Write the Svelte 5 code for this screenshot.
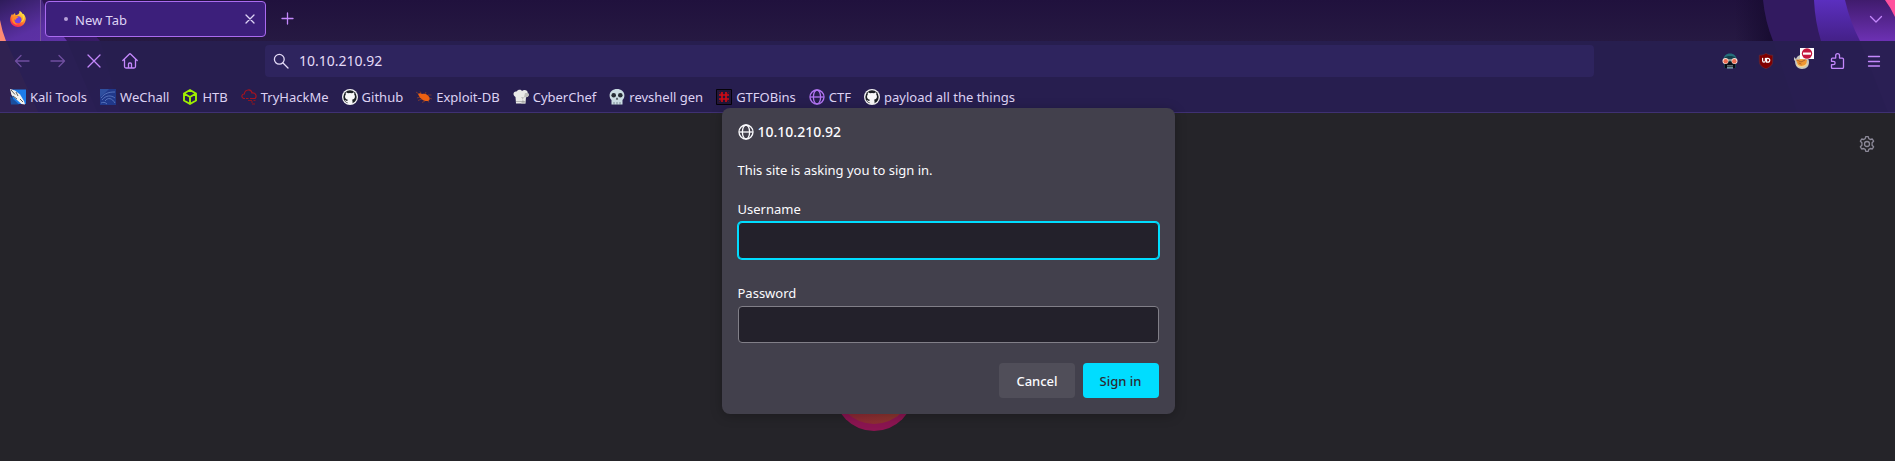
<script>
  const bookmarks = [
    { icon: 'kali', label: 'Kali Tools' },
    { icon: 'wechall', label: 'WeChall' },
    { icon: 'htb', label: 'HTB' },
    { icon: 'thm', label: 'TryHackMe' },
    { icon: 'github', label: 'Github' },
    { icon: 'exploit', label: 'Exploit-DB' },
    { icon: 'chef', label: 'CyberChef' },
    { icon: 'skull', label: 'revshell gen' },
    { icon: 'gtfo', label: 'GTFOBins' },
    { icon: 'globe', label: 'CTF' },
    { icon: 'github', label: 'payload all the things' }
  ];
  let address = $state('10.10.210.92');
  let username = $state('');
  let password = $state('');
</script>

{#snippet globe()}
  <g fill="none" stroke="currentColor" stroke-width="1.3">
    <circle cx="8" cy="8" r="7" />
    <ellipse cx="8" cy="8" rx="3.6" ry="7" />
    <path d="M1.2 8h13.600" />
  </g>
{/snippet}

{#snippet glyph(name)}
  <svg class="glyph" viewBox="0 0 16 16" width="16" height="16" aria-hidden="true">
    {#if name === 'kali'}
      <path d="M2 .5h14V15H3z" fill="#1c7ce8" />
      <path d="M0 7l9 8.500H1z" fill="#1a4f9e" />
      <path d="M0 0l5 1.500 5 4 4 6.500 1 3.500-3.500-.5-5-4.500L1.500 6z" fill="#f4f4f0" />
      <path d="M1 1l4 4.500M6 3l2 4M10 10l3 3M3 7l4 3" stroke="#333" stroke-width=".8" fill="none" />
    {:else if name === 'wechall'}
      <path d="M0 0h16v16H0z" fill="#20388a" />
      <path d="M0 0h9L4 5 0 8z" fill="#2f4f9f" />
      <path d="M1 9C5 4 9 3 15 3M2 11c4-5 9-5 13-2M5 12c3-4 7-3 10 2M1 14c2-1 4-1 6 1" stroke="#6380c6" stroke-width=".8" fill="none" />
    {:else if name === 'htb'}
      <path d="M8 1l6 3.500v7L8 15l-6-3.500v-7zM2.500 4.800L8 8l5.500-3.200M8 8v6.500" fill="none" stroke="#9fef00" stroke-width="1.900" stroke-linejoin="round" />
    {:else if name === 'thm'}
      <path d="M4 9.500H2.500C-.2 8 .8 5 3.300 5 4 .2 10.200-.5 11 4c4-.5 5 3.500 3 5.500H9M5 9.500h2.500" fill="none" stroke="#a5131f" stroke-width="1.200" />
      <path d="M7 11.500h4M12.500 11.500h2M10 13h2M11 15h3" stroke="#8f1420" stroke-width="1.200" />
    {:else if name === 'github'}
      <circle cx="8" cy="8" r="8" fill="#f4f4f4" />
      <circle cx="8" cy="8" r="6.700" fill="#1b1f23" />
      <path d="M4 3.200l2 1.100a8 8 0 0 1 4 0l2-1.100c.5 1 .4 1.700.2 2.400 1.600 2.200.6 4.800-2.200 5.200.5.500.6 1.200.6 4.300H5.400v-2c-2 .3-2.100-1.500-3-2 1.500-.2 1.500 1.200 3 .8 0-.6.200-.8.500-1.100C3.200 10.400 2.200 7.800 3.800 5.600c-.2-.7-.2-1.400.2-2.400z" fill="#f8f8f8" />
    {:else if name === 'exploit'}
      <path d="M2 5c2-1.500 3.500-.5 4 0 3-1 6 .5 7.500 3.500.5 2 0 3-1.500 3.500-4 .5-7.500-2-9-5z" fill="#ee6112" />
      <path d="M3 5L0 3M5 4L4 2.500M9 5l1-2M12 6h3.500M4 8l-3 1M6 10l-4 1.500M9 12l-3 1.500M13 9l3 1M12 12l1 1.500" stroke="#ae4a1d" stroke-width=".6" />
    {:else if name === 'chef'}
      <path d="M3 14.500L2.500 8C-.8 6.500.3 2 3.500 2.600 5 .3 8 .3 9 2c2.500-2 6-.5 5.700 2C17 5.500 15.500 8 13 8.300L12.500 14.500z" fill="#e9e9e7" />
      <path d="M8 8l5 .3c2.500-.3 4-2.800 1.700-4.300L12 4l-1 4-3 6.500h4.500z" fill="#bdbdbb" />
      <path d="M3 12.500h9.700" stroke="#999" stroke-width=".7" />
    {:else if name === 'skull'}
      <path d="M.6 6.500C.6 2.500 4 0 8 0s7.400 2.500 7.400 6.500c0 2.500-1 3.500-1.900 4.500v4.500H2.500V11C1.500 10 .6 9 .6 6.500z" fill="#cbdce3" />
      <circle cx="4.700" cy="6.300" r="2.300" fill="#262c35" />
      <circle cx="11.300" cy="6.300" r="2.300" fill="#262c35" />
      <path d="M8 8.300l1.200 2.200H6.800z" fill="#262c35" />
      <path d="M5 13v3M8 13v3M11 13v3" stroke="#5a6773" stroke-width=".7" />
    {:else if name === 'gtfo'}
      <path d="M.5.5h15v15H.5z" fill="#211638" stroke="#050208" />
      <path d="M6 3v10M10 3v10M3 6h10M3 10h10" stroke="#cf0b15" stroke-width="1.700" />
      <path d="M3 3l2 2M13 3l-2 2M3 13l2-2M13 13l-2-2" stroke="#6f101f" stroke-width=".8" />
    {:else}
      {@render globe()}
    {/if}
  </svg>
{/snippet}

<div class="browser">
  <header class="chrome">
    <svg class="art art-left" viewBox="0 0 160 112" width="160" height="112" aria-hidden="true">
      <defs>
        <linearGradient id="lilac" x1="0" y1="0" x2=".4" y2="1"><stop offset="0" stop-color="#2f1c5b" /><stop offset=".35" stop-color="#5a30a2" /><stop offset="1" stop-color="#6b35b1" /></linearGradient>
        <linearGradient id="violet" x1="0" y1="0" x2="1" y2="1"><stop offset="0" stop-color="#251148" /><stop offset="1" stop-color="#482180" /></linearGradient>
      </defs>
      <path d="M0 0h82q2 24 18 41l20 71H0z" fill="url(#violet)" />
      <path d="M0 0h42q8 20 25 41l30 71H0z" fill="url(#lilac)" />
      <path d="M0 20q2 11 6 21l32 71H0z" fill="#ff8b73" />
    </svg>
    <svg class="art art-right" viewBox="0 0 160 112" width="160" height="112" aria-hidden="true">
      <defs>
        <linearGradient id="indigo" x1="0" y1="0" x2="0" y2="1"><stop offset="0" stop-color="#5b2fbf" /><stop offset=".37" stop-color="#442087" /></linearGradient>
        <linearGradient id="plum" x1="0" y1="0" x2="0" y2="1"><stop offset="0" stop-color="#401b6d" /><stop offset=".37" stop-color="#6d31b4" /></linearGradient>
        <linearGradient id="shade" x1="0" y1="0" x2="1" y2="0"><stop offset="0" stop-color="#170b30" stop-opacity="0" /><stop offset="1" stop-color="#170b30" /></linearGradient>
      </defs>
      <path d="M0 0h30l10 41H0z" fill="url(#shade)" />
      <path d="M28 0q2 21 10 41l24 71h98V0z" fill="#321a60" />
      <path d="M79 0q1 22 7 41l12 71h62V0z" fill="url(#indigo)" />
      <path d="M110 0q5 22 15 41l28 71h7V0z" fill="url(#plum)" />
      <path d="M150 0q6 8 10 17V0z" fill="#ff509d" />
    </svg>

    <div class="tabs">
      <button class="view" aria-label="Firefox View">
        <svg viewBox="0 0 16 16" width="16" height="16" aria-hidden="true">
          <defs>
            <linearGradient id="flame" x1=".8" y1="0" x2=".3" y2="1"><stop offset="0" stop-color="#fff44f" /><stop offset=".4" stop-color="#ffa52a" /><stop offset=".75" stop-color="#ff5136" /><stop offset="1" stop-color="#f11d67" /></linearGradient>
          </defs>
          <path d="M9.500 0c2 1 3 2.500 3.200 3.600l.6-.9c2 2 2.700 4.300 2.400 6.100C15 13 12 16 8 16S.3 13 .2 8.800c0-2.500.8-4.500 2-6l.4 1.500L5 2l.5 2.200C8 4 9.800 2.500 9.500 0z" fill="url(#flame)" />
          <circle cx="8" cy="8.800" r="3.500" fill="#7542e5" />
          <path d="M4.500 5.500c1.500-1 3-.3 4 .9-1 .2-2.300.7-2.500 2.100-.8.5-1.500.2-2-.4 0 3 2 5 4.400 5C5 14.500 2 12 2 8z" fill="#ff8a26" />
          <path d="M9.500 0c.2 2.500 4 3 3.500 7-.2 2-1.500 4-3.500 4.600 5.500-.1 6-7 3.100-8.600C12 2 11 1 9.500 0z" fill="#ffdc3d" />
        </svg>
      </button>
      <div class="tab">
        <span class="dot"></span>
        <span class="title">New Tab</span>
        <button class="close" aria-label="Close tab">
          <svg viewBox="0 0 16 16" width="16" height="16"><path d="M4 4l8 8M12 4l-8 8" /></svg>
        </button>
      </div>
      <button class="tool add" aria-label="Open a new tab">
        <svg viewBox="0 0 16 16" width="16" height="16"><path d="M7.500 2v11M2 7.500h11" /></svg>
      </button>
      <button class="tool list" aria-label="List all tabs">
        <svg viewBox="0 0 16 16" width="16" height="16"><path d="M2.500 5.500L8 11l5.500-5.500" /></svg>
      </button>
    </div>

    <div class="toolbar">
      <nav class="group" aria-label="Navigation">
        <button class="tool" disabled aria-label="Back">
          <svg viewBox="0 0 16 16" width="16" height="16"><path d="M15 8H1.500M7 2.500L1.500 8 7 13.500" /></svg>
        </button>
        <button class="tool" disabled aria-label="Forward">
          <svg viewBox="0 0 16 16" width="16" height="16"><path d="M1 8h13.500M9 2.500L14.500 8 9 13.500" /></svg>
        </button>
        <button class="tool" aria-label="Stop">
          <svg viewBox="0 0 16 16" width="16" height="16"><path d="M2 2l12 12M14 2L2 14" /></svg>
        </button>
        <button class="tool" aria-label="Home">
          <svg viewBox="0 0 16 16" width="16" height="16"><path d="M.8 7.500L7.200 1.200q.8-.8 1.600 0l6.400 6.300M2.500 6.500v7q0 1.500 1.500 1.500h8q1.500 0 1.500-1.500v-7M6.500 15v-4q0-1 1-1h1q1 0 1 1v4" /></svg>
        </button>
      </nav>
      <label class="url">
        <svg viewBox="0 0 16 16" width="16" height="16" aria-hidden="true"><circle cx="6.300" cy="6.300" r="4.900" /><path d="M10 10l5 5" /></svg>
        <input type="text" aria-label="Address" bind:value={address} />
      </label>
      <div class="group">
        <button class="tool" aria-label="Masked profile">
          <svg class="art-icon" viewBox="0 0 16 16" width="16" height="16">
            <path d="M1.500 7C1.500 3 4 .5 8 .5S14.500 3 14.500 7z" fill="#266f7b" />
            <path d="M2 5.500C3 3.500 6 3 8 3s5 .5 6 2.500V15H2z" fill="#153d4a" />
            <path d="M3 9h10v6H3z" fill="#080d14" />
            <circle cx="3.500" cy="8" r="3" fill="#f7e0d7" /><circle cx="12.500" cy="8" r="3" fill="#f7e0d7" />
            <circle cx="3.700" cy="8.200" r="2.200" fill="#ee6c50" /><circle cx="12.300" cy="8.200" r="2.200" fill="#ee6c50" />
            <path d="M6 6.500h4v1H6z" fill="#f7e0d7" />
            <path d="M5 12.500h6v.8H5z" fill="#a8c0c6" /><path d="M5 14.200h6v1.300H5z" fill="#8ab6be" />
          </svg>
        </button>
        <button class="tool" aria-label="uBlock Origin">
          <svg class="art-icon" viewBox="0 0 16 16" width="16" height="16">
            <path d="M8 .2c2 1.500 4 2 6.700 2V8c0 4-2.500 6-6.700 7.800C3.800 14 1.300 12 1.300 8V2.200C4 2.200 6 1.700 8 .2z" fill="#800000" stroke="#65303b" stroke-width=".6" />
            <path d="M4.600 5.300v2.200q0 1.700 1.400 1.700t1.400-1.700V5.300M8.600 5.300v3.900h1.200a1.900 1.900 0 0 0 0-3.900z" fill="none" stroke="#fff" stroke-width="1.200" />
          </svg>
        </button>
        <button class="tool" aria-label="Cookie editor">
          <svg class="art-icon" viewBox="0 0 16 16" width="16" height="16">
            <path d="M2 6l-2-2v3l1 1c0 4 2 8 7 8s7-3 7-7-3-7-7-7-5 2-6 4z" fill="#c7c7bf" />
            <path d="M2 7c3-1 8-1 11 0l-1 5c-2 2-5 2-8 0z" fill="#f09732" />
            <path d="M3 12c2 2 7 2.500 10-1" fill="none" stroke="#f6d38e" stroke-width="1.200" />
            <path d="M3 7l4 2 4-2M5 10l2 1" stroke="#9b552b" stroke-width=".8" fill="none" />
          </svg>
          <span class="badge">
            <svg class="art-icon" viewBox="0 0 14 11" width="14" height="11" aria-hidden="true"><path d="M0 0h14v11H0z" fill="#fff" /><circle cx="7" cy="5.500" r="5.200" fill="#c4173f" /><path d="M3 4.500h8v2.200H3z" fill="#fff" /></svg>
          </span>
        </button>
        <button class="tool" aria-label="Extensions">
          <svg viewBox="0 0 16 16" width="16" height="16"><path d="M1.500 7V6q0-.9.900-.9h3.300V2.600a1.900 1.900 0 0 1 3.800 0v2.500h2.800q1.200 0 1.200 1.200v8q0 1.200-1.200 1.200H2.700q-1.200 0-1.200-1.200v-2.600h1.900a1.700 1.700 0 0 0 0-3.400H1.500z" /></svg>
        </button>
        <button class="tool" aria-label="Menu">
          <svg viewBox="0 0 16 16" width="16" height="16"><path d="M2.500 3.500h11M2.500 8.500h11M2.500 13h11" /></svg>
        </button>
      </div>
    </div>

    <nav class="bookmarks" aria-label="Bookmarks">
      {#each bookmarks as mark}
        <a href="#{mark.icon}">{@render glyph(mark.icon)}<span>{mark.label}</span></a>
      {/each}
    </nav>
  </header>

  <main>
    <svg class="logo" viewBox="0 0 80 80" width="80" height="80" aria-hidden="true">
      <defs><linearGradient id="ember" x1="0" y1="1" x2="1" y2=".7"><stop offset="0" stop-color="#8e2438" /><stop offset="1" stop-color="#8b3b2b" /></linearGradient></defs>
      <circle cx="40" cy="40" r="40" fill="#8b1551" />
      <path d="M62 67l12-14 2-14z" fill="#8b3449" />
      <circle cx="40" cy="34" r="39" fill="url(#ember)" />
    </svg>
    <button class="gear" aria-label="Customize">
      <svg viewBox="0 0 16 16" width="16" height="16"><path d="M6.200 2.600L6.800.6h2.400l.6 2 1.500.9 2-.5 1.300 2.200-1.500 1.500v2.600l1.500 1.500-1.300 2.200-2-.5-1.500.9-.6 2H6.800l-.6-2-1.500-.9-2 .5-1.300-2.200 1.500-1.500V6.700L1.400 5.200 2.700 3l2 .5z" /><circle cx="8" cy="8" r="2.500" /></svg>
    </button>
  </main>

  <form class="dialog" role="dialog" aria-labelledby="site" onsubmit={(e) => e.preventDefault()}>
    <h1 id="site"><svg viewBox="0 0 16 16" width="16" height="16" aria-hidden="true">{@render globe()}</svg><span>10.10.210.92</span></h1>
    <p>This site is asking you to sign in.</p>
    <div class="field">
      <label for="username">Username</label>
      <input id="username" class="active" type="text" bind:value={username} />
    </div>
    <div class="field">
      <label for="password">Password</label>
      <input id="password" type="password" bind:value={password} />
    </div>
    <div class="actions">
      <button type="button">Cancel</button>
      <button type="submit" class="primary">Sign in</button>
    </div>
  </form>
</div>

<style>
  :global(body) {
    margin: 0;
    background: #252429;
  }
  .browser {
    position: relative;
    min-height: 100vh;
    display: flex;
    flex-direction: column;
    font: 13px/20px "Noto Sans", sans-serif;
    color: #fbfbfe;
    overflow: hidden;
  }
  .browser * {
    box-sizing: border-box;
  }
  svg {
    display: block;
    flex: none;
  }
  button,
  input {
    font: inherit;
    color: inherit;
    margin: 0;
    padding: 0;
    border: 0;
    background: none;
  }
  .chrome {
    position: relative;
    background: linear-gradient(#20113d, #261942 41px);
    border-bottom: 1px solid #3f3172;
  }
  .art {
    position: absolute;
    top: 0;
  }
  .art-left {
    left: 0;
  }
  .art-right {
    right: 0;
  }
  .tabs {
    position: relative;
    display: flex;
    align-items: center;
    height: 41px;
    padding-right: 1px;
  }
  .view {
    width: 41px;
    height: 41px;
    display: grid;
    place-items: center;
    padding: 0 4px 4px 0;
    border-right: 1px solid #76539f;
  }
  .tab {
    width: 221px;
    height: 36px;
    margin: 0 4px 3px;
    padding: 0 7px 0 18px;
    display: flex;
    align-items: center;
    gap: 7px;
    border: 1px solid #aa6bf0;
    border-radius: 4px;
    background: #3c1f7b;
    color: #ded3f5;
  }
  .dot {
    width: 4px;
    height: 4px;
    border-radius: 50%;
    background: #b7a1d9;
  }
  .title {
    flex: 1;
    padding-top: 2px;
  }
  .close {
    display: grid;
  }
  .tool {
    position: relative;
    width: 36px;
    height: 32px;
    display: grid;
    place-items: center;
    color: #c488fc;
  }
  .tool:disabled {
    opacity: 0.45;
  }
  .tool svg,
  .url svg,
  .close svg,
  .gear svg {
    fill: none;
    stroke: currentColor;
    stroke-width: 1.3;
    stroke-linecap: round;
    stroke-linejoin: round;
  }
  .tool .art-icon {
    stroke: none;
  }
  .list {
    margin-left: auto;
  }
  .tabs .tool {
    margin-bottom: 3px;
  }
  .toolbar {
    position: relative;
    display: flex;
    align-items: center;
    justify-content: space-between;
    height: 40px;
    padding: 0 3px 0 4px;
    background: rgba(40, 30, 80, 0.96);
  }
  .group {
    display: flex;
  }
  .url {
    width: 70.4%;
    height: 32px;
    margin-left: 117px;
    margin-right: auto;
    padding: 0 8px;
    display: flex;
    align-items: center;
    gap: 10px;
    border-radius: 4px;
    background: #2e245e;
    color: #e4dbf7;
    font-size: 14px;
  }
  .url input {
    flex: 1;
    min-width: 0;
    outline: none;
  }
  .badge {
    position: absolute;
    top: 3px;
    right: 6px;
  }
  .bookmarks {
    position: relative;
    display: flex;
    align-items: center;
    gap: 13px;
    height: 31px;
    padding: 0 10px;
    background: rgba(40, 30, 80, 0.96);
  }
  .bookmarks a {
    display: flex;
    align-items: center;
    gap: 4px;
    color: #ddd2f3;
    text-decoration: none;
    white-space: nowrap;
  }
  .glyph {
    color: #b275f3;
  }
  main {
    flex: 1;
    position: relative;
  }
  .logo {
    position: absolute;
    top: 238px;
    left: calc(50% - 114px);
  }
  .gear {
    position: absolute;
    top: 23px;
    right: 20px;
    color: #8c8998;
  }
  .dialog {
    position: absolute;
    top: 108px;
    left: 50%;
    width: 453px;
    margin: 0 0 0 -226px;
    padding: 16px;
    border-radius: 8px;
    background: #42404c;
    box-shadow: 0 2px 12px rgba(0, 0, 0, 0.25);
  }
  h1 {
    display: flex;
    align-items: center;
    gap: 4px;
    height: 16px;
    margin: 0 0 20px;
    font-size: 14px;
    font-weight: 500;
  }
  p {
    margin: 0 0 19px;
  }
  .field {
    display: flex;
    flex-direction: column;
    gap: 3px;
    margin-bottom: 24px;
  }
  .field input {
    height: 37px;
    padding: 0 8px;
    border: 1px solid #817f88;
    border-radius: 4px;
    background: #23212b;
    outline: none;
  }
  .field .active {
    border-color: #00ddff;
    box-shadow: 0 0 0 1px #00ddff;
  }
  .field + .actions {
    margin-top: -4px;
  }
  .actions {
    display: flex;
    justify-content: flex-end;
    gap: 8px;
  }
  .actions button {
    height: 35px;
    padding: 0 17px;
    border-radius: 4px;
    background: #504e59;
    font-weight: 500;
  }
  .actions .primary {
    background: #00ddff;
    color: #2b2a33;
  }
</style>
